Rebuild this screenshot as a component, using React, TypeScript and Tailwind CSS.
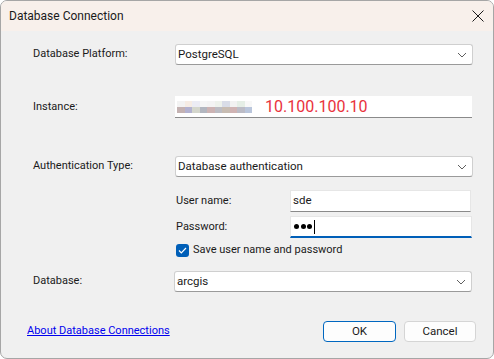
import React from "react";

const font = "font-['Segoe_UI',Roboto,'Liberation_Sans',sans-serif]";

function Chevron() {
  return (
    <svg width="10" height="6" viewBox="0 0 10 6" className="shrink-0">
      <path d="M1 1l4 4 4-4" fill="none" stroke="#5f5f5f" strokeWidth="1" />
    </svg>
  );
}

function Combo({ value }: { value: string }) {
  return (
    <div className="flex h-full w-[298px] items-center justify-between rounded-[3px] border border-[#cfcfcf] border-b-[#9a9a9a] bg-white pl-[2px] pr-[5px] text-[11.5px] text-[#1a1a1a]">
      <span>{value}</span>
      <Chevron />
    </div>
  );
}

// blurred, pixelated host name in front of the IP
const blurCells = [
  ["#f3f3f3", "#f6ece4", "#ececf4", "#f6f6f6", "#f4f4f4", "#eef2ec", "#d9dde8", "#f2f2f2", "#e5eee6", "#f8f8f8"],
  ["#c4b2b2", "#b3b2d0", "#d4d6cc", "#b3b7c0", "#cdb4b4", "#bdbdc4", "#c8bdb3", "#d0b4b4", "#bcbcc6", "#bac6dc"],
];

function Blurred() {
  return (
    <div className="flex w-[75px] shrink-0 flex-col blur-[0.5px]">
      {blurCells.map((row, i) => (
        <div key={i} className="flex">
          {row.map((c, j) => (
            <div key={j} className="h-[6px] w-[7.5px]" style={{ background: c }} />
          ))}
        </div>
      ))}
    </div>
  );
}

export default function App() {
  return (
    <div className={`h-[359px] w-[494px] bg-white ${font}`}>
      <div className="flex h-full w-full flex-col overflow-hidden rounded-[7px] border border-[#a6a6a6] bg-[#f0f0f0]">
        {/* Title bar */}
        <div className="flex h-[30px] shrink-0 items-center justify-between bg-[#f8f0eb] pl-[8px] pr-[9px] text-[12px] text-[#1a1a1a]">
          <span>Database Connection</span>
          <svg width="12" height="12" viewBox="0 0 12 12">
            <path d="M0.5 0.5l11 11M11.5 0.5l-11 11" stroke="#1a1a1a" strokeWidth="1" />
          </svg>
        </div>

        <div className="flex flex-col pl-[32px] text-[11px] text-[#1a1a1a]">
          {/* Platform */}
          <div className="mt-[13px] flex h-[21px] items-center">
            <span className="w-[142px]">Database Platform:</span>
            <Combo value="PostgreSQL" />
          </div>

          {/* Instance */}
          <div className="mt-[31px] flex h-[22px] items-center">
            <span className="w-[142px]">Instance:</span>
            <div className="flex h-full w-[297px] items-center border-b border-[#8a8a8a] bg-white pl-[2px]">
              <Blurred />
              <span className="ml-[13px] text-[16px] leading-none text-[#e9323c]">10.100.100.10</span>
            </div>
          </div>

          {/* Authentication */}
          <div className="mt-[38px] flex h-[21px] items-center">
            <span className="w-[142px]">Authentication Type:</span>
            <Combo value="Database authentication" />
          </div>

          <div className="ml-[143px] flex flex-col">
            <div className="mt-[13px] flex h-[22px] items-center">
              <span className="w-[114px]">User name:</span>
              <div className="flex h-full w-[181px] items-center border border-[#e6e6e6] border-b-[#8a8a8a] bg-white pl-[2px] text-[11.5px]">
                sde
              </div>
            </div>
            <div className="mt-[4px] flex h-[22px] items-center">
              <span className="w-[114px]">Password:</span>
              <div className="flex h-full w-[182px] items-center border border-[#e6e6e6] border-b-2 border-b-[#005fb8] bg-white pl-[3px]">
                <div className="flex gap-[1.5px]">
                  <span className="h-[5px] w-[5px] rounded-full bg-black" />
                  <span className="h-[5px] w-[5px] rounded-full bg-black" />
                  <span className="h-[5px] w-[5px] rounded-full bg-black" />
                </div>
                <span className="ml-[2px] h-[14px] w-px bg-black" />
              </div>
            </div>
            <div className="mt-[6px] flex h-[13px] items-center gap-[4px]">
              <div className="flex h-[13px] w-[13px] items-center justify-center rounded-[3px] bg-[#005fb8]">
                <svg width="9" height="7" viewBox="0 0 9 7">
                  <path d="M1 3.5l2.3 2.3L8 1" fill="none" stroke="white" strokeWidth="1.2" />
                </svg>
              </div>
              <span>Save user name and password</span>
            </div>
          </div>

          {/* Database */}
          <div className="mt-[14px] flex h-[21px] items-center">
            <span className="w-[141px]">Database:</span>
            <Combo value="arcgis" />
          </div>

          {/* Footer */}
          <div className="-ml-[6px] mt-[29px] flex h-[21px] items-center">
            <a href="#" className="text-[#0000ee] underline">
              About Database Connections
            </a>
            <button className="ml-auto h-full w-[73px] rounded-[4px] border border-[#0067c0] bg-[#fdfdfd] text-[11.5px]">
              OK
            </button>
            <button className="ml-[8px] mr-[17px] h-full w-[72px] rounded-[4px] border border-[#d5d5d5] bg-[#fdfdfd] text-[11.5px]">
              Cancel
            </button>
          </div>
        </div>
      </div>
    </div>
  );
}
